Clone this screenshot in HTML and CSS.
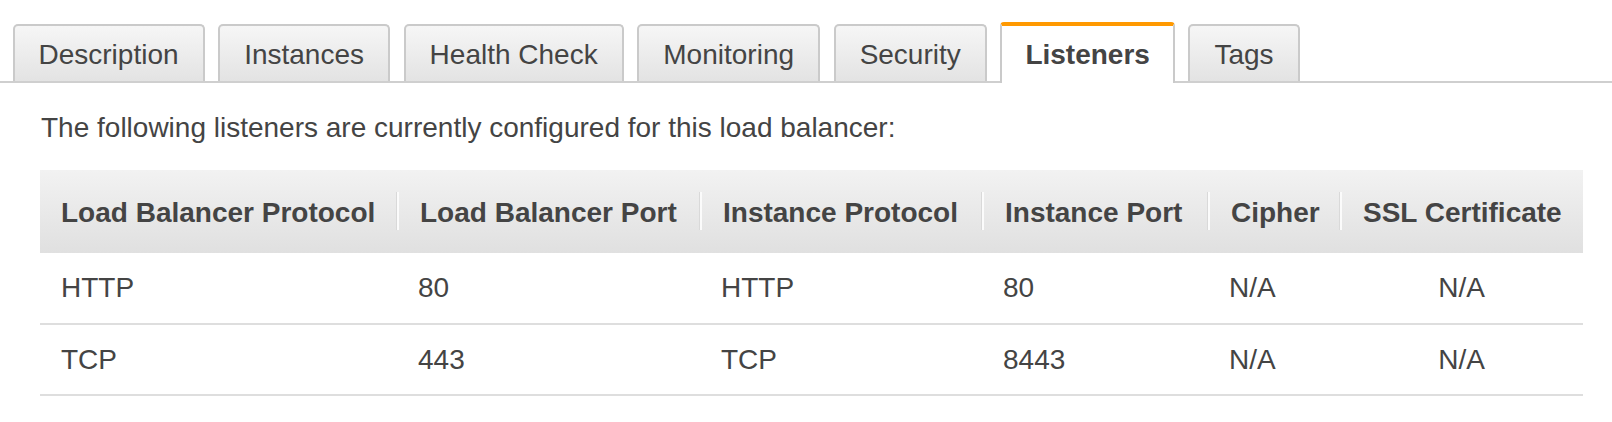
FILE: index.html
```html
<!DOCTYPE html>
<html>
<head>
<meta charset="utf-8">
<link rel="stylesheet" href="styles.css">
</head>
<body>
<div class="tabs">
  <div class="tab">Description</div>
  <div class="tab">Instances</div>
  <div class="tab">Health Check</div>
  <div class="tab">Monitoring</div>
  <div class="tab">Security</div>
  <div class="tab active">Listeners</div>
  <div class="tab">Tags</div>
</div>
<div class="content">
  <p class="intro">The following listeners are currently configured for this load balancer:</p>
  <table class="listeners">
    <colgroup>
      <col class="c1"><col class="c2"><col class="c3"><col class="c4"><col class="c5"><col class="c6">
    </colgroup>
    <thead>
      <tr>
        <th><div class="first">Load Balancer Protocol</div></th>
        <th><div>Load Balancer Port</div></th>
        <th><div>Instance Protocol</div></th>
        <th><div>Instance Port</div></th>
        <th><div>Cipher</div></th>
        <th><div>SSL Certificate</div></th>
      </tr>
    </thead>
    <tbody>
      <tr>
        <td>HTTP</td><td>80</td><td>HTTP</td><td>80</td><td>N/A</td><td class="center">N/A</td>
      </tr>
      <tr>
        <td>TCP</td><td>443</td><td>TCP</td><td>8443</td><td>N/A</td><td class="center">N/A</td>
      </tr>
    </tbody>
  </table>
</div>
</body>
</html>
```

FILE: styles.css
```css
html, body {
  margin: 0;
  padding: 0;
  background: #fff;
}
body {
  font-family: "Liberation Sans", Arial, Helvetica, sans-serif;
  font-size: 28px;
  color: #444;
}
.tabs {
  display: flex;
  align-items: flex-end;
  gap: 13.6px;
  padding: 22px 0 0 12.5px;
  border-bottom: 2px solid #cfcfcf;
  height: 59px;
  box-sizing: content-box;
}
.tab {
  height: 55px;
  line-height: 57px;
  padding: 0 24px;
  border: 2px solid #cacaca;
  border-bottom: none;
  border-radius: 5px 5px 0 0;
  background: linear-gradient(#f6f6f6, #e3e3e3);
  white-space: nowrap;
}
.tab.active {
  height: 57px;
  line-height: 57px;
  border-top: 4px solid #ff9900;
  border-radius: 4px 4px 0 0;
  background: #fff;
  font-weight: bold;
  margin-bottom: -2px;
  padding: 0 23px;
}
.content {
  padding: 0 29px 0 40px;
}
.intro {
  margin: 29px 0 26px 0;
  line-height: 32px;
  padding-left: 1px;
}
.listeners {
  width: 100%;
  border-collapse: collapse;
  table-layout: fixed;
}
.c1 { width: 357px; }
.c2 { width: 303px; }
.c3 { width: 282px; }
.c4 { width: 226px; }
.c5 { width: 132px; }
.c6 { width: 243px; }
.listeners thead tr {
  background: linear-gradient(#f2f2f2, #e0e0e0);
}
.listeners th {
  padding: 22px 0 23px 0;
  text-align: left;
  font-weight: bold;
  white-space: nowrap;
}
.listeners th div {
  height: 38px;
  line-height: 34px;
  padding-top: 4px;
  box-sizing: border-box;
  padding-left: 21px;
  border-left: 2px solid #fbfbfb;
  box-shadow: -1px 0 0 #d9d9d9;
}
.listeners th div.first {
  border-left: none;
  box-shadow: none;
  padding-left: 21px;
}
.listeners td {
  height: 71px;
  padding: 0 0 0 21px;
  border-bottom: 2px solid #dedede;
  box-sizing: border-box;
  vertical-align: middle;
  line-height: 32px;
  white-space: nowrap;
}
.listeners td.center {
  text-align: center;
  padding-left: 0;
}
```
